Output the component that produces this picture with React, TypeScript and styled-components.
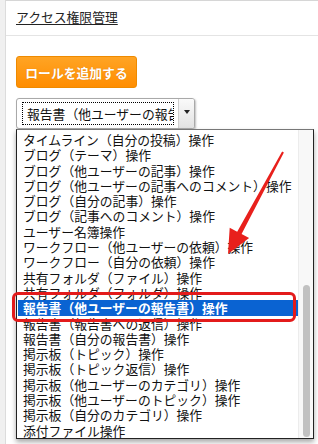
import styled, { createGlobalStyle } from 'styled-components';

const GlobalStyle = createGlobalStyle`
  html, body {
    margin: 0;
    padding: 0;
    background: #f0f0f0;
    overflow: hidden;
  }
  * { box-sizing: border-box; }
`;

const Page = styled.div`
  position: relative;
  width: 318px;
  height: 444px;
  padding-left: 5px;
  font-family: "Noto Sans CJK JP", "Noto Sans", sans-serif;
  color: #111;
`;

const Panel = styled.section`
  height: 100%;
  background: #fff;
  border-left: 1px solid #dcdcdc;
  border-top: 1px solid #d6d6d6;
`;

const Header = styled.header`
  height: 35px;
  padding: 0 10px;
  display: flex;
  align-items: center;
  border-bottom: 1px solid #e4e4e4;
`;

const Title = styled.a`
  font-size: 12.8px;
  color: #222;
  text-decoration: underline;
  text-underline-offset: 2px;
  line-height: 1;
  margin-top: -2px;
`;

const Body = styled.div`
  padding: 20px 10px;
  display: flex;
  flex-direction: column;
  align-items: flex-start;
  gap: 10px;
`;

const AddButton = styled.button`
  width: 121px;
  height: 32px;
  border: 1px solid #ee8a00;
  border-radius: 3px;
  background: linear-gradient(#ffa424, #ff8d00);
  color: #fff;
  font-family: inherit;
  font-weight: 700;
  font-size: 12.8px;
  padding: 0;
  text-shadow: 0 0 1px rgba(160, 80, 0, 0.4);
`;

const SelectBox = styled.div`
  width: 179px;
  height: 31px;
  display: flex;
  border: 1px solid #a9a9a9;
  border-radius: 3px;
  background: #fff;
  box-shadow: 1px 1px 2px rgba(0, 0, 0, 0.25);
  overflow: hidden;
`;

const SelectValue = styled.div`
  flex: 1;
  min-width: 0;
  margin: 3px 4px 3px 5px;
  border: 1px dotted #000;
  padding-left: 4px;
  font-size: 12.8px;
  line-height: 21px;
  white-space: nowrap;
  overflow: hidden;
`;

const SelectArrow = styled.div`
  width: 16px;
  display: flex;
  align-items: center;
  justify-content: center;
  border-left: 1px solid #cfcfcf;
  background: linear-gradient(#fafafa, #e2e2e2);

  &::after {
    content: '';
    border-left: 3px solid transparent;
    border-right: 3px solid transparent;
    border-top: 4px solid #222;
    margin-bottom: 3px;
  }
`;

const ListBox = styled.div`
  position: absolute;
  left: 16px;
  top: 129px;
  width: 298px;
  height: 310px;
  display: flex;
  background: #fff;
  border: 1px solid #222;
  border-top-color: #777;
  box-shadow: 0 3px 5px rgba(0, 0, 0, 0.35);
`;

const Options = styled.ul`
  flex: 1;
  margin: 0;
  padding: 2px 0 0 1px;
  list-style: none;
  overflow: hidden;
`;

const Option = styled.li<{ $selected?: boolean }>`
  height: 15.3px;
  line-height: 15.3px;
  padding-left: 5px;
  font-size: 12.8px;
  white-space: nowrap;
  background: ${p => (p.$selected ? '#0a63d2' : 'transparent')};
  color: ${p => (p.$selected ? '#fff' : '#111')};
  font-weight: ${p => (p.$selected ? 700 : 400)};
`;

const ScrollTrack = styled.div`
  width: 15px;
  padding: 155px 3px 1px 4px;
  background: #f8f8f8;
  border-left: 1px solid #ececec;
  display: flex;
`;

const ScrollThumb = styled.div`
  flex: 1;
  border-radius: 4px;
  background: #c1c1c1;
`;

const Highlight = styled.div`
  position: absolute;
  left: 12px;
  top: 292px;
  width: 284px;
  height: 30px;
  border: 3px solid #e31b1b;
  border-radius: 6px;
`;

const ArrowLayer = styled.svg`
  position: absolute;
  left: 0;
  top: 0;
  pointer-events: none;
`;

const options = [
  'タイムライン（自分の投稿）操作',
  'ブログ（テーマ）操作',
  'ブログ（他ユーザーの記事）操作',
  'ブログ（他ユーザーの記事へのコメント）操作',
  'ブログ（自分の記事）操作',
  'ブログ（記事へのコメント）操作',
  'ユーザー名簿操作',
  'ワークフロー（他ユーザーの依頼）操作',
  'ワークフロー（自分の依頼）操作',
  '共有フォルダ（ファイル）操作',
  '共有フォルダ（フォルダ）操作',
  '報告書（他ユーザーの報告書）操作',
  '報告書（報告書への返信）操作',
  '報告書（自分の報告書）操作',
  '掲示板（トピック）操作',
  '掲示板（トピック返信）操作',
  '掲示板（他ユーザーのカテゴリ）操作',
  '掲示板（他ユーザーのトピック）操作',
  '掲示板（自分のカテゴリ）操作',
  '添付ファイル操作',
];

const selected = '報告書（他ユーザーの報告書）操作';

export default function App() {
  return (
    <Page>
      <GlobalStyle />
      <Panel>
        <Header>
          <Title>アクセス権限管理</Title>
        </Header>
        <Body>
          <AddButton>ロールを追加する</AddButton>
          <SelectBox>
            <SelectValue>{selected}</SelectValue>
            <SelectArrow />
          </SelectBox>
        </Body>
      </Panel>

      <ListBox>
        <Options>
          {options.map(o => (
            <Option key={o} $selected={o === selected}>{o}</Option>
          ))}
        </Options>
        <ScrollTrack>
          <ScrollThumb />
        </ScrollTrack>
      </ListBox>

      <Highlight />

      <ArrowLayer width="318" height="444" viewBox="0 0 318 444">
        <polygon
          points="282.1,151.5 283.9,152.5 241.6,234.1 249.1,238.1 228,254 229.7,227.7 237.2,231.7"
          fill="#e8201c"
        />
      </ArrowLayer>
    </Page>
  );
}
